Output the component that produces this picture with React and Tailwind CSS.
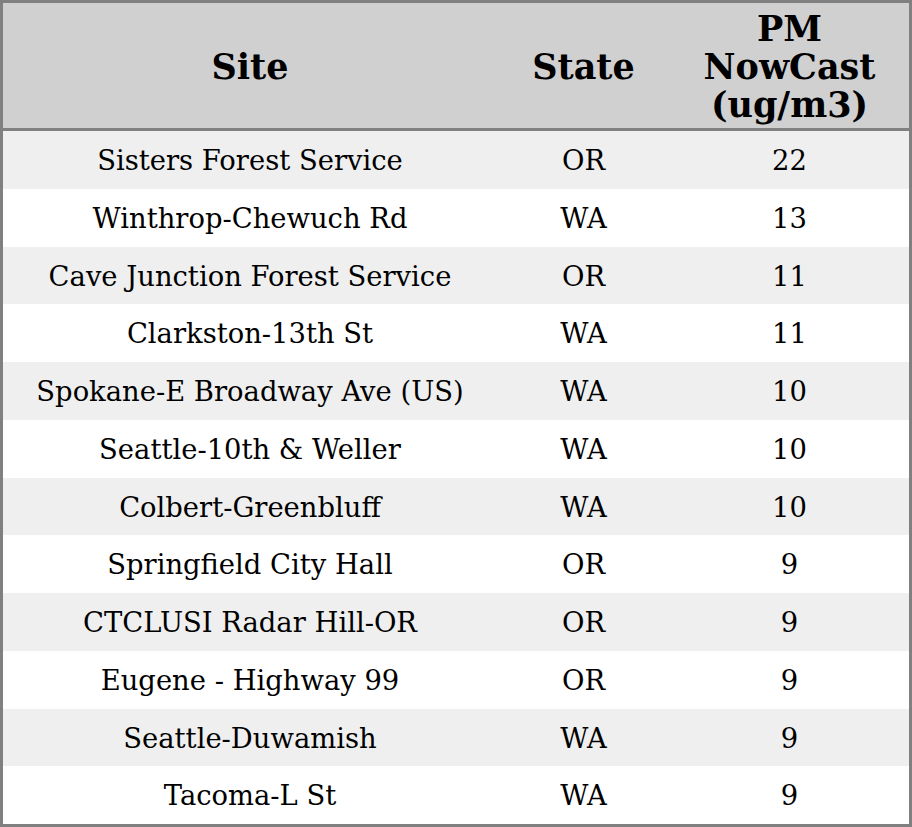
const rows = [
  ["Sisters Forest Service", "OR", "22"],
  ["Winthrop-Chewuch Rd", "WA", "13"],
  ["Cave Junction Forest Service", "OR", "11"],
  ["Clarkston-13th St", "WA", "11"],
  ["Spokane-E Broadway Ave (US)", "WA", "10"],
  ["Seattle-10th & Weller", "WA", "10"],
  ["Colbert-Greenbluff", "WA", "10"],
  ["Springfield City Hall", "OR", "9"],
  ["CTCLUSI Radar Hill-OR", "OR", "9"],
  ["Eugene - Highway 99", "OR", "9"],
  ["Seattle-Duwamish", "WA", "9"],
  ["Tacoma-L St", "WA", "9"],
]

export default function App() {
  return (
    <div
      className="h-[827px] w-[912px] border-[3px] border-[#808080] bg-white text-black"
      style={{ fontFamily: '"DejaVu Serif", serif' }}
    >
      <div className="grid h-[128px] grid-cols-[494px_173px_239px] items-center border-b-[3px] border-[#808080] bg-[#d0d0d0] pt-[2px] text-center text-[35px] font-bold leading-[38px]">
        <div>Site</div>
        <div>State</div>
        <div>
          PM
          <br />
          NowCast
          <br />
          (ug/m3)
        </div>
      </div>
      {rows.map(([site, state, value], i) => (
        <div
          key={site}
          className={`grid h-[57.75px] grid-cols-[494px_173px_239px] items-center pt-[2px] text-center text-[27.4px] leading-none ${
            i % 2 === 0 ? "bg-[#efefef]" : "bg-white"
          }`}
        >
          <div>{site}</div>
          <div>{state}</div>
          <div>{value}</div>
        </div>
      ))}
    </div>
  )
}
